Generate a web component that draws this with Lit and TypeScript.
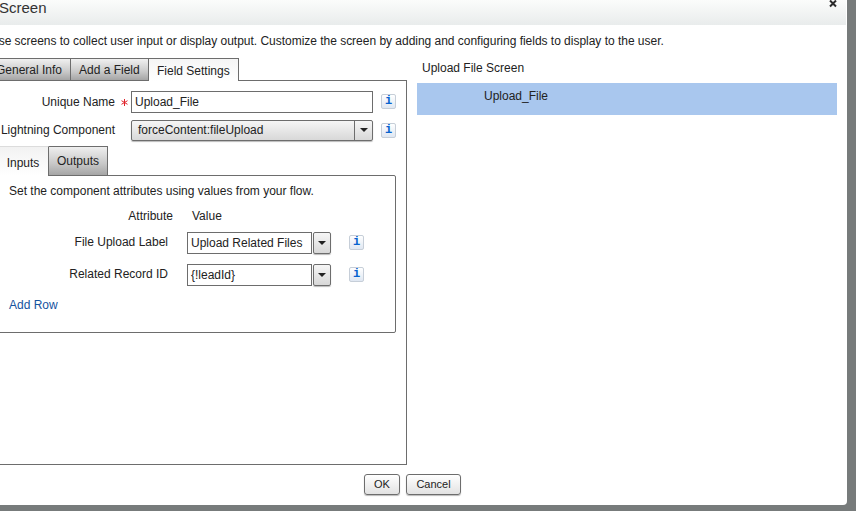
import { LitElement, html, css } from "lit";
import { customElement } from "lit/decorators.js";

@customElement("app-root")
export class AppRoot extends LitElement {
  static styles = css`
    :host {
      display: block;
      width: 856px;
      height: 511px;
      overflow: hidden;
      background: #777b7b;
      font-family: "Liberation Sans", Arial, sans-serif;
      font-size: 12px;
      color: #222;
    }
    * { box-sizing: border-box; }
    .dialog {
      width: 867px;
      height: 505px;
      margin-left: -20px;
      background: #fff;
      border-bottom-right-radius: 4px;
      display: flex;
      flex-direction: column;
    }
    .head {
      height: 25px;
      flex: none;
      margin-right: 1px;
      background: linear-gradient(#fbfcfb, #e9ecec);
      padding-left: 19px;
      padding-right: 9px;
      display: flex;
      justify-content: space-between;
      align-items: flex-start;
      font-size: 15px;
      line-height: 15px;
      color: #333;
    }
    .close { display: block; }
    .desc {
      margin: 9px 0 0 10px;
      height: 14px;
      line-height: 14px;
      white-space: nowrap;
      letter-spacing: -0.02px;
    }
    .body { display: flex; margin-top: 10px; flex: 1; min-height: 0; }
    .left { width: 427px; display: flex; flex-direction: column; flex: none; }
    .tabs { display: flex; height: 22px; padding-left: 2px; flex: none; }
    .tab {
      border: 1px solid #6d6d6d;
      border-bottom: none;
      border-left: none;
      background: linear-gradient(#f0f0f0 0%, #c9c9c9 60%, #a5a5a5 100%);
      display: flex;
      align-items: center;
      padding: 1px 8px 0;
      white-space: nowrap;
    }
    .tab.first { border-left: 1px solid #6d6d6d; }
    .tab.on {
      background: linear-gradient(#f5f5f5, #ffffff);
      padding-top: 2px;
      position: relative;
      margin-bottom: -1px;
      z-index: 1;
    }
    .t1 { width: 89px; padding-left: 13px; }
    .t2 { width: 78px; }
    .t3 { width: 90px; }
    .panel {
      border: 1px solid #6d6d6d;
      height: 385px;
      padding-top: 10px;
      flex: none;
    }
    .fld {
      display: grid;
      grid-template-columns: 134px 9px 242px 15px;
      align-items: center;
      height: 22px;
    }
    .fld + .fld { margin-top: 6px; }
    .lab { text-align: right; white-space: nowrap; }
    .star { margin-left: 5px; }
    .input {
      border: 1px solid #6d6d6d;
      height: 22px;
      line-height: 20px;
      padding-left: 3px;
      background: #fff;
      white-space: nowrap;
      overflow: hidden;
    }
    .input.wide { margin-left: 7px; width: 242px; }
    .info {
      width: 15px;
      height: 15px;
      border: 1px solid #c6ced8;
      border-radius: 2px;
      background: linear-gradient(#ffffff, #dfe7f2);
      color: #0863cf;
      font: bold 12px/13px "Liberation Mono", monospace;
      text-align: center;
    }
    .fld .info { margin-left: 15px; margin-top: -1px; }
    .fld + .fld .info { margin-top: 1px; }
    .select {
      margin-left: 7px;
      width: 242px;
      height: 21px;
      border: 1px solid #6d6d6d;
      border-radius: 2px;
      background: linear-gradient(#f6f6f6, #d8d8d8);
      display: flex;
      align-items: center;
      box-shadow: 0 1px 1px #bbb;
    }
    .select .val { flex: 1; padding-left: 6px; line-height: 19px; }
    .select .arrow-box {
      width: 18px;
      height: 100%;
      border-left: 1px solid #6d6d6d;
      display: flex;
      align-items: center;
      justify-content: center;
    }
    .arrow {
      width: 0;
      height: 0;
      border-left: 4px solid transparent;
      border-right: 4px solid transparent;
      border-top: 4px solid #222;
    }
    .subtabs { display: flex; height: 30px; margin-top: 5px; position: relative; }
    .sub {
      border: 1px solid #6d6d6d;
      border-bottom: none;
      display: flex;
      align-items: center;
      justify-content: center;
      background: linear-gradient(#efefef, #c7c7c7 60%, #a5a5a5);
      height: 29px;
    }
    .sub.a {
      width: 68px;
      border-left: none;
      padding-left: 17px;
      padding-top: 2px;
      background: linear-gradient(#f2f2f2, #fff);
      height: 30px;
      margin-bottom: -1px;
      z-index: 1;
      position: relative;
      border-top: 1px solid #dcdcdc;
      border-right: 1px solid #6d6d6d;
    }
    .sub.b { width: 59px; border-left: none; }
    .inner {
      width: 415px;
      height: 158px;
      border: 1px solid #6d6d6d;
      border-radius: 2px;
      margin-top: -1px;
      padding: 8px 0 0 27px;
    }
    .intro { line-height: 14px; white-space: nowrap; }
    .cols {
      display: grid;
      grid-template-columns: 164px 95px;
      margin-top: 11px;
      line-height: 14px;
    }
    .cols .h1 { text-align: right; }
    .cols .h2 { padding-left: 19px; }
    .arow { display: flex; align-items: center; height: 22px; }
    .rows { display: flex; flex-direction: column; gap: 10px; margin-top: 9px; }
    .arow .lab { width: 159px; padding-bottom: 2px; }
    .arow .input { width: 125px; margin-left: 19px; }
    .btn-arrow {
      width: 18px;
      height: 22px;
      margin-left: 1px;
      border: 1px solid #6d6d6d;
      border-radius: 2px;
      background: linear-gradient(#f6f6f6, #d8d8d8);
      display: flex;
      align-items: center;
      justify-content: center;
      box-shadow: 0 1px 1px #bbb;
    }
    .arow .info { margin-left: 18px; margin-top: -1px; }
    .add { margin-top: 12px; color: #15539e; line-height: 14px; }
    .right { width: 420px; margin-left: 10px; flex: none; }
    .rtitle { margin: 3px 0 0 5px; height: 14px; line-height: 14px; }
    .bar {
      margin-top: 8px;
      height: 32px;
      background: #a9c7ee;
      padding: 6px 0 0 67px;
      line-height: 14px;
    }
    .foot {
      flex: none;
      height: 41px;
      display: flex;
      gap: 6px;
      padding: 10px 0 0 384px;
    }
    .btn {
      height: 21px;
      border: 1px solid #6d6d6d;
      border-radius: 3px;
      background: linear-gradient(#ffffff, #e2e2e2);
      display: flex;
      align-items: center;
      justify-content: center;
      font-size: 11px;
      padding-bottom: 1px;
      box-shadow: 0 1px 1px #bbb;
    }
    .ok { width: 36px; }
    .cancel { width: 55px; }
  `;

  render() {
    return html`
      <div class="dialog">
        <div class="head">
          <span>Screen</span>
          <svg class="close" width="8" height="8" viewBox="0 0 8 8"><path d="M1 0.5 7 6.5M7 0.5 1 6.5" stroke="#2b2b2b" stroke-width="2"/></svg>
        </div>
        <div class="desc">Use screens to collect user input or display output. Customize the screen by adding and configuring fields to display to the user.</div>
        <div class="body">
          <div class="left">
            <div class="tabs">
              <div class="tab first t1">General Info</div>
              <div class="tab t2">Add a Field</div>
              <div class="tab on t3">Field Settings</div>
            </div>
            <div class="panel">
              <div class="fld">
                <div class="lab">Unique Name</div>
                <svg class="star" width="9" height="9" viewBox="0 0 9 9"><path d="M4.5 1v7M1.5 2.7l6 3.6M7.5 2.7l-6 3.6" stroke="#e0222a" stroke-width="1"/></svg>
                <div class="input wide">Upload_File</div>
                <div class="info">i</div>
              </div>
              <div class="fld">
                <div class="lab">Lightning Component</div>
                <span></span>
                <div class="select"><span class="val">forceContent:fileUpload</span><span class="arrow-box"><span class="arrow"></span></span></div>
                <div class="info">i</div>
              </div>
              <div class="subtabs">
                <div class="sub a">Inputs</div>
                <div class="sub b">Outputs</div>
              </div>
              <div class="inner">
                <div class="intro">Set the component attributes using values from your flow.</div>
                <div class="cols"><div class="h1">Attribute</div><div class="h2">Value</div></div>
                <div class="rows">
                  <div class="arow">
                    <div class="lab">File Upload Label</div>
                    <div class="input">Upload Related Files</div>
                    <div class="btn-arrow"><span class="arrow"></span></div>
                    <div class="info">i</div>
                  </div>
                  <div class="arow">
                    <div class="lab">Related Record ID</div>
                    <div class="input">{!leadId}</div>
                    <div class="btn-arrow"><span class="arrow"></span></div>
                    <div class="info">i</div>
                  </div>
                </div>
                <div class="add">Add Row</div>
              </div>
            </div>
          </div>
          <div class="right">
            <div class="rtitle">Upload File Screen</div>
            <div class="bar">Upload_File</div>
          </div>
        </div>
        <div class="foot">
          <div class="btn ok">OK</div>
          <div class="btn cancel">Cancel</div>
        </div>
      </div>
    `;
  }
}
